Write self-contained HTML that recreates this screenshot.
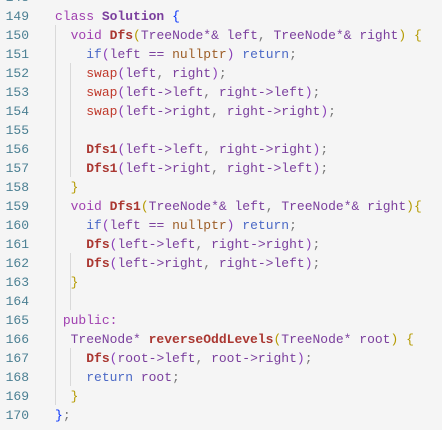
<!DOCTYPE html>
<html><head><style>
body{margin:0;width:442px;height:430px;overflow:hidden;background:#f5f5f5;font-family:"Liberation Mono",monospace;font-size:13px;}
.wrap{position:absolute;top:-12.5px;left:0;}
.l{height:19px;line-height:19px;white-space:pre;position:relative;}
.n{position:absolute;left:0;width:29px;text-align:right;color:#4a7f92;}
.c{position:absolute;left:55px;color:#7a3e9d;}
.g{position:absolute;width:1px;background:#d9d9d9;}
.k{color:#4b69c6}.s{color:#a03fb0}.f{color:#aa3731;font-weight:bold}.w{color:#c0392b}
.o{color:#9c5d27}.p{color:#777}.b1{color:#0431fa}.b2{color:#b59a00}.b3{color:#8a3fb8}
.t{color:#7a3e9d;font-weight:bold}
</style></head><body>
<div class="g" style="left:55px;top:25px;height:380px"></div>
<div class="g" style="left:70px;top:63px;height:114px"></div>
<div class="g" style="left:70px;top:253px;height:57px"></div>
<div class="g" style="left:70px;top:348px;height:38px"></div>
<div class="wrap">
<div class="l"><span class="n">148</span></div>
<div class="l"><span class="n">149</span><span class="c"><span class="s">class</span> <span class="t">Solution</span> <span class="b1">{</span></span></div>
<div class="l"><span class="n">150</span><span class="c">  <span class="s">void</span> <span class="f">Dfs</span><span class="b2">(</span>TreeNode*&amp; left<span class="p">,</span> TreeNode*&amp; right<span class="b2">)</span> <span class="b2">{</span></span></div>
<div class="l"><span class="n">151</span><span class="c">    <span class="k">if</span><span class="b3">(</span>left == <span class="o">nullptr</span><span class="b3">)</span> <span class="k">return</span><span class="p">;</span></span></div>
<div class="l"><span class="n">152</span><span class="c">    <span class="w">swap</span><span class="b3">(</span>left<span class="p">,</span> right<span class="b3">)</span><span class="p">;</span></span></div>
<div class="l"><span class="n">153</span><span class="c">    <span class="w">swap</span><span class="b3">(</span>left-&gt;left<span class="p">,</span> right-&gt;left<span class="b3">)</span><span class="p">;</span></span></div>
<div class="l"><span class="n">154</span><span class="c">    <span class="w">swap</span><span class="b3">(</span>left-&gt;right<span class="p">,</span> right-&gt;right<span class="b3">)</span><span class="p">;</span></span></div>
<div class="l"><span class="n">155</span></div>
<div class="l"><span class="n">156</span><span class="c">    <span class="f">Dfs1</span><span class="b3">(</span>left-&gt;left<span class="p">,</span> right-&gt;right<span class="b3">)</span><span class="p">;</span></span></div>
<div class="l"><span class="n">157</span><span class="c">    <span class="f">Dfs1</span><span class="b3">(</span>left-&gt;right<span class="p">,</span> right-&gt;left<span class="b3">)</span><span class="p">;</span></span></div>
<div class="l"><span class="n">158</span><span class="c">  <span class="b2">}</span></span></div>
<div class="l"><span class="n">159</span><span class="c">  <span class="s">void</span> <span class="f">Dfs1</span><span class="b2">(</span>TreeNode*&amp; left<span class="p">,</span> TreeNode*&amp; right<span class="b2">){</span></span></div>
<div class="l"><span class="n">160</span><span class="c">    <span class="k">if</span><span class="b3">(</span>left == <span class="o">nullptr</span><span class="b3">)</span> <span class="k">return</span><span class="p">;</span></span></div>
<div class="l"><span class="n">161</span><span class="c">    <span class="f">Dfs</span><span class="b3">(</span>left-&gt;left<span class="p">,</span> right-&gt;right<span class="b3">)</span><span class="p">;</span></span></div>
<div class="l"><span class="n">162</span><span class="c">    <span class="f">Dfs</span><span class="b3">(</span>left-&gt;right<span class="p">,</span> right-&gt;left<span class="b3">)</span><span class="p">;</span></span></div>
<div class="l"><span class="n">163</span><span class="c">  <span class="b2">}</span></span></div>
<div class="l"><span class="n">164</span></div>
<div class="l"><span class="n">165</span><span class="c"> <span class="s">public:</span></span></div>
<div class="l"><span class="n">166</span><span class="c">  TreeNode* <span class="f">reverseOddLevels</span><span class="b2">(</span>TreeNode* root<span class="b2">)</span> <span class="b2">{</span></span></div>
<div class="l"><span class="n">167</span><span class="c">    <span class="f">Dfs</span><span class="b3">(</span>root-&gt;left<span class="p">,</span> root-&gt;right<span class="b3">)</span><span class="p">;</span></span></div>
<div class="l"><span class="n">168</span><span class="c">    <span class="k">return</span> root<span class="p">;</span></span></div>
<div class="l"><span class="n">169</span><span class="c">  <span class="b2">}</span></span></div>
<div class="l"><span class="n">170</span><span class="c"><span class="b1">}</span><span class="p">;</span></span></div>
</div>
</body></html>
